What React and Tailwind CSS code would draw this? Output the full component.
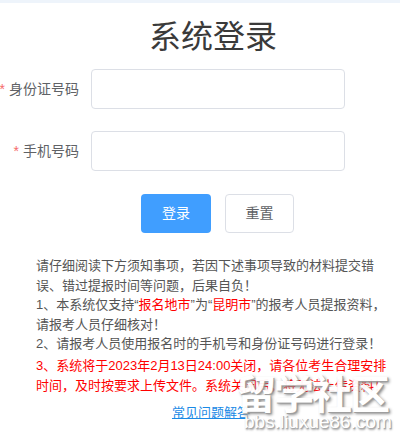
import React, { useState } from 'react';

const font = 'font-["Liberation_Sans","Noto_Sans_CJK_SC",sans-serif]';

const Field = ({ label, value, onChange }) => (
    <div className="flex items-center h-[40px]">
        <label className="w-[91px] shrink-0 pr-[12px] flex justify-end items-center whitespace-nowrap text-[14px] text-[#606266]">
            <span className="text-[#f56c6c] mr-[4px]">*</span>
            {label}
        </label>
        <input
            value={value}
            onChange={onChange}
            className="w-[254px] h-[40px] border border-[#dcdfe6] rounded-[4px] px-[15px] text-[14px] text-[#606266] outline-none focus:border-[#409eff]"
        />
    </div>
);

export default function App() {
    const [idNo, setIdNo] = useState('');
    const [phone, setPhone] = useState('');

    return (
        <div className={`relative w-[400px] h-[440px] overflow-hidden bg-white ${font}`}>
            <div className="h-[3px] bg-[#eef4fb]" />

            <h1 className="text-center text-[32px] leading-[40px] text-[#3a3a3a] mt-[14px] ml-[26px]">系统登录</h1>

            <div className="mt-[12px] flex flex-col gap-[22px]">
                <Field label="身份证号码" value={idNo} onChange={(e) => setIdNo(e.target.value)} />
                <Field label="手机号码" value={phone} onChange={(e) => setPhone(e.target.value)} />
            </div>

            <div className="mt-[23px] flex pl-[141px] gap-[14px]">
                <button
                    onClick={() => {}}
                    className="w-[70px] h-[39px] rounded-[4px] bg-[#409eff] text-white text-[14px]"
                >
                    登录
                </button>
                <button
                    onClick={() => { setIdNo(''); setPhone(''); }}
                    className="w-[69px] h-[39px] rounded-[4px] border border-[#dcdfe6] bg-white text-[#606266] text-[14px]"
                >
                    重置
                </button>
            </div>

            <div className="mt-[23px] ml-[36px] w-[352px] text-[13px] leading-[19.5px] text-[#555]">
                <p>请仔细阅读下方须知事项，若因下述事项导致的材料提交错误、错过提报时间等问题，后果自负！</p>
                <p>
                    1、本系统仅支持“<span className="text-[#f00]">报名地市</span>”为“<span className="text-[#f00]">昆明市</span>”的报考人员提报资料，请报考人员仔细核对！
                </p>
                <p>2、请报考人员使用报名时的手机号和身份证号码进行登录！</p>
                <p className="text-[#f00] mt-[2px] leading-[20px]">3、系统将于2023年2月13日24:00关闭，请各位考生合理安排时间，及时按要求上传文件。系统关闭后，将无法上传资料！</p>
            </div>

            <div className="mt-[4px] text-center pl-[22px]">
                <a href="#" className="text-[13px] text-[#1a8ae6] underline">常见问题解答</a>
            </div>

            {/* watermark */}
            <div className="absolute left-[236px] top-[374px] pointer-events-none select-none">
                <div className="text-[40px] leading-[42px] font-bold tracking-[-2px] text-white [text-shadow:1px_1px_0_#999,2px_2px_3px_#888] opacity-95">留学社区</div>
                <div className="-mt-[4px] ml-[8px] text-[19px] leading-[20px] text-white [text-shadow:1px_1px_0_#aaa,1px_2px_2px_#999]">bbs.liuxue86.com</div>
            </div>
        </div>
    );
}
